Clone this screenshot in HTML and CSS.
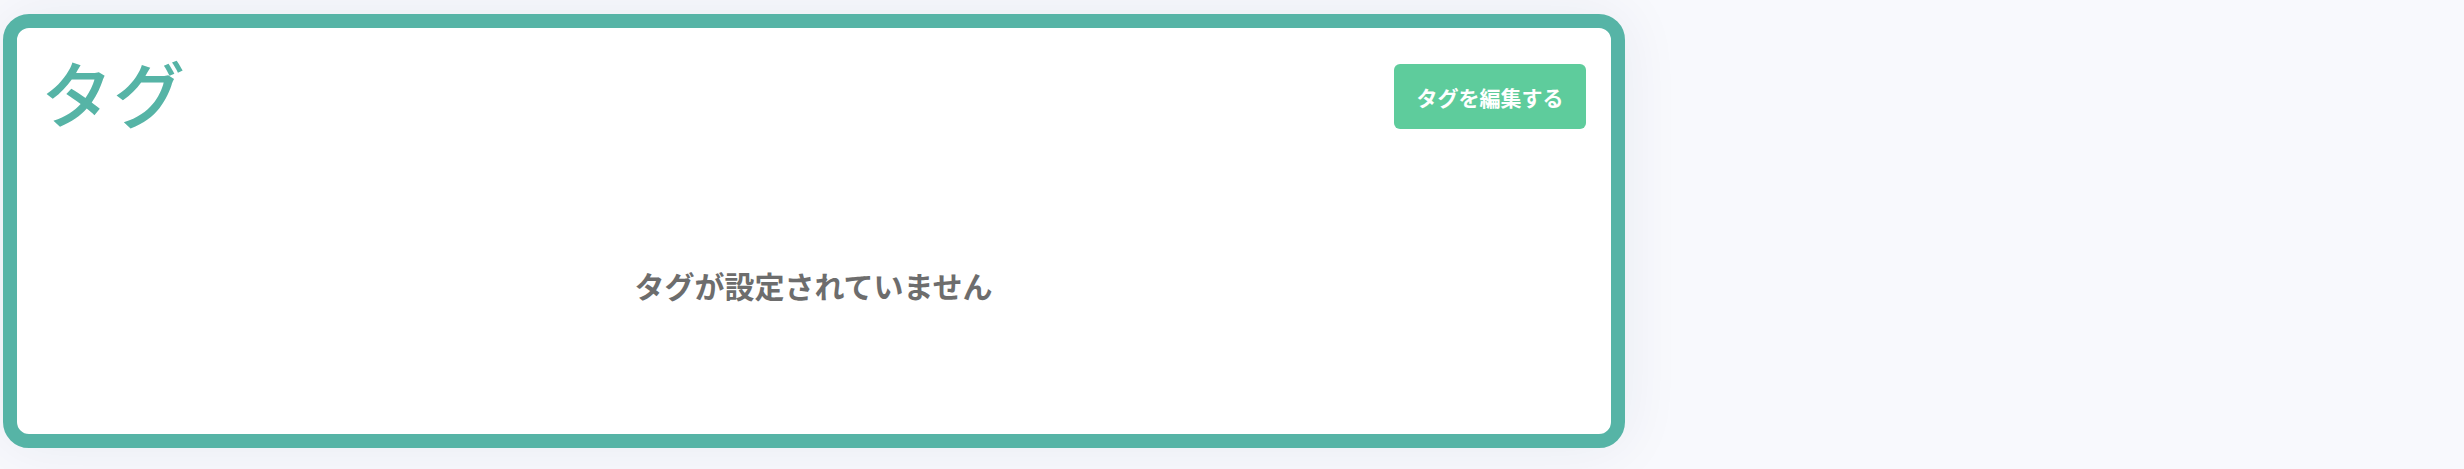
FILE: index.html
```html
<!DOCTYPE html>
<html lang="ja">
<head>
<meta charset="utf-8">
<title>タグ</title>
<link rel="stylesheet" href="styles.css">
</head>
<body>
<main class="page">
  <section class="tag-card">
    <header class="tag-card__header">
      <h1 class="tag-card__title">タグ</h1>
      <button class="tag-card__edit" type="button">タグを編集する</button>
    </header>
    <p class="tag-card__empty">タグが設定されていません</p>
  </section>
</main>
</body>
</html>
```
FILE: styles.css
```css
html, body {
  margin: 0;
  padding: 0;
}
body {
  background: #f8f9fd;
  font-family: "Noto Sans CJK JP", "Noto Sans", sans-serif;
  width: 2464px;
  height: 469px;
  overflow: hidden;
}
.page {
  padding: 14px 0 0 3px;
}
.tag-card {
  box-sizing: border-box;
  width: 1622px;
  height: 434px;
  background: #ffffff;
  border: 14px solid #56b4a6;
  border-radius: 26px;
  box-shadow: 0 0 60px rgba(30, 40, 90, 0.07);
  padding: 27px 25px 0 24px;
}
.tag-card__header {
  display: flex;
  justify-content: space-between;
  align-items: flex-start;
}
.tag-card__title {
  margin: 0;
  font-size: 72px;
  font-weight: 500;
  line-height: 1;
  color: #56b4a6;
}
.tag-card__edit {
  margin-top: 9px;
  width: 192px;
  height: 65px;
  border: none;
  border-radius: 6px;
  background: #5ecc9c;
  color: #ffffff;
  font-family: inherit;
  font-size: 21px;
  font-weight: 700;
  padding: 0;
}
.tag-card__empty {
  margin: 141px 0 0;
  text-align: center;
  font-size: 30px;
  font-weight: 700;
  line-height: 1;
  color: #6d6d6d;
}
```
